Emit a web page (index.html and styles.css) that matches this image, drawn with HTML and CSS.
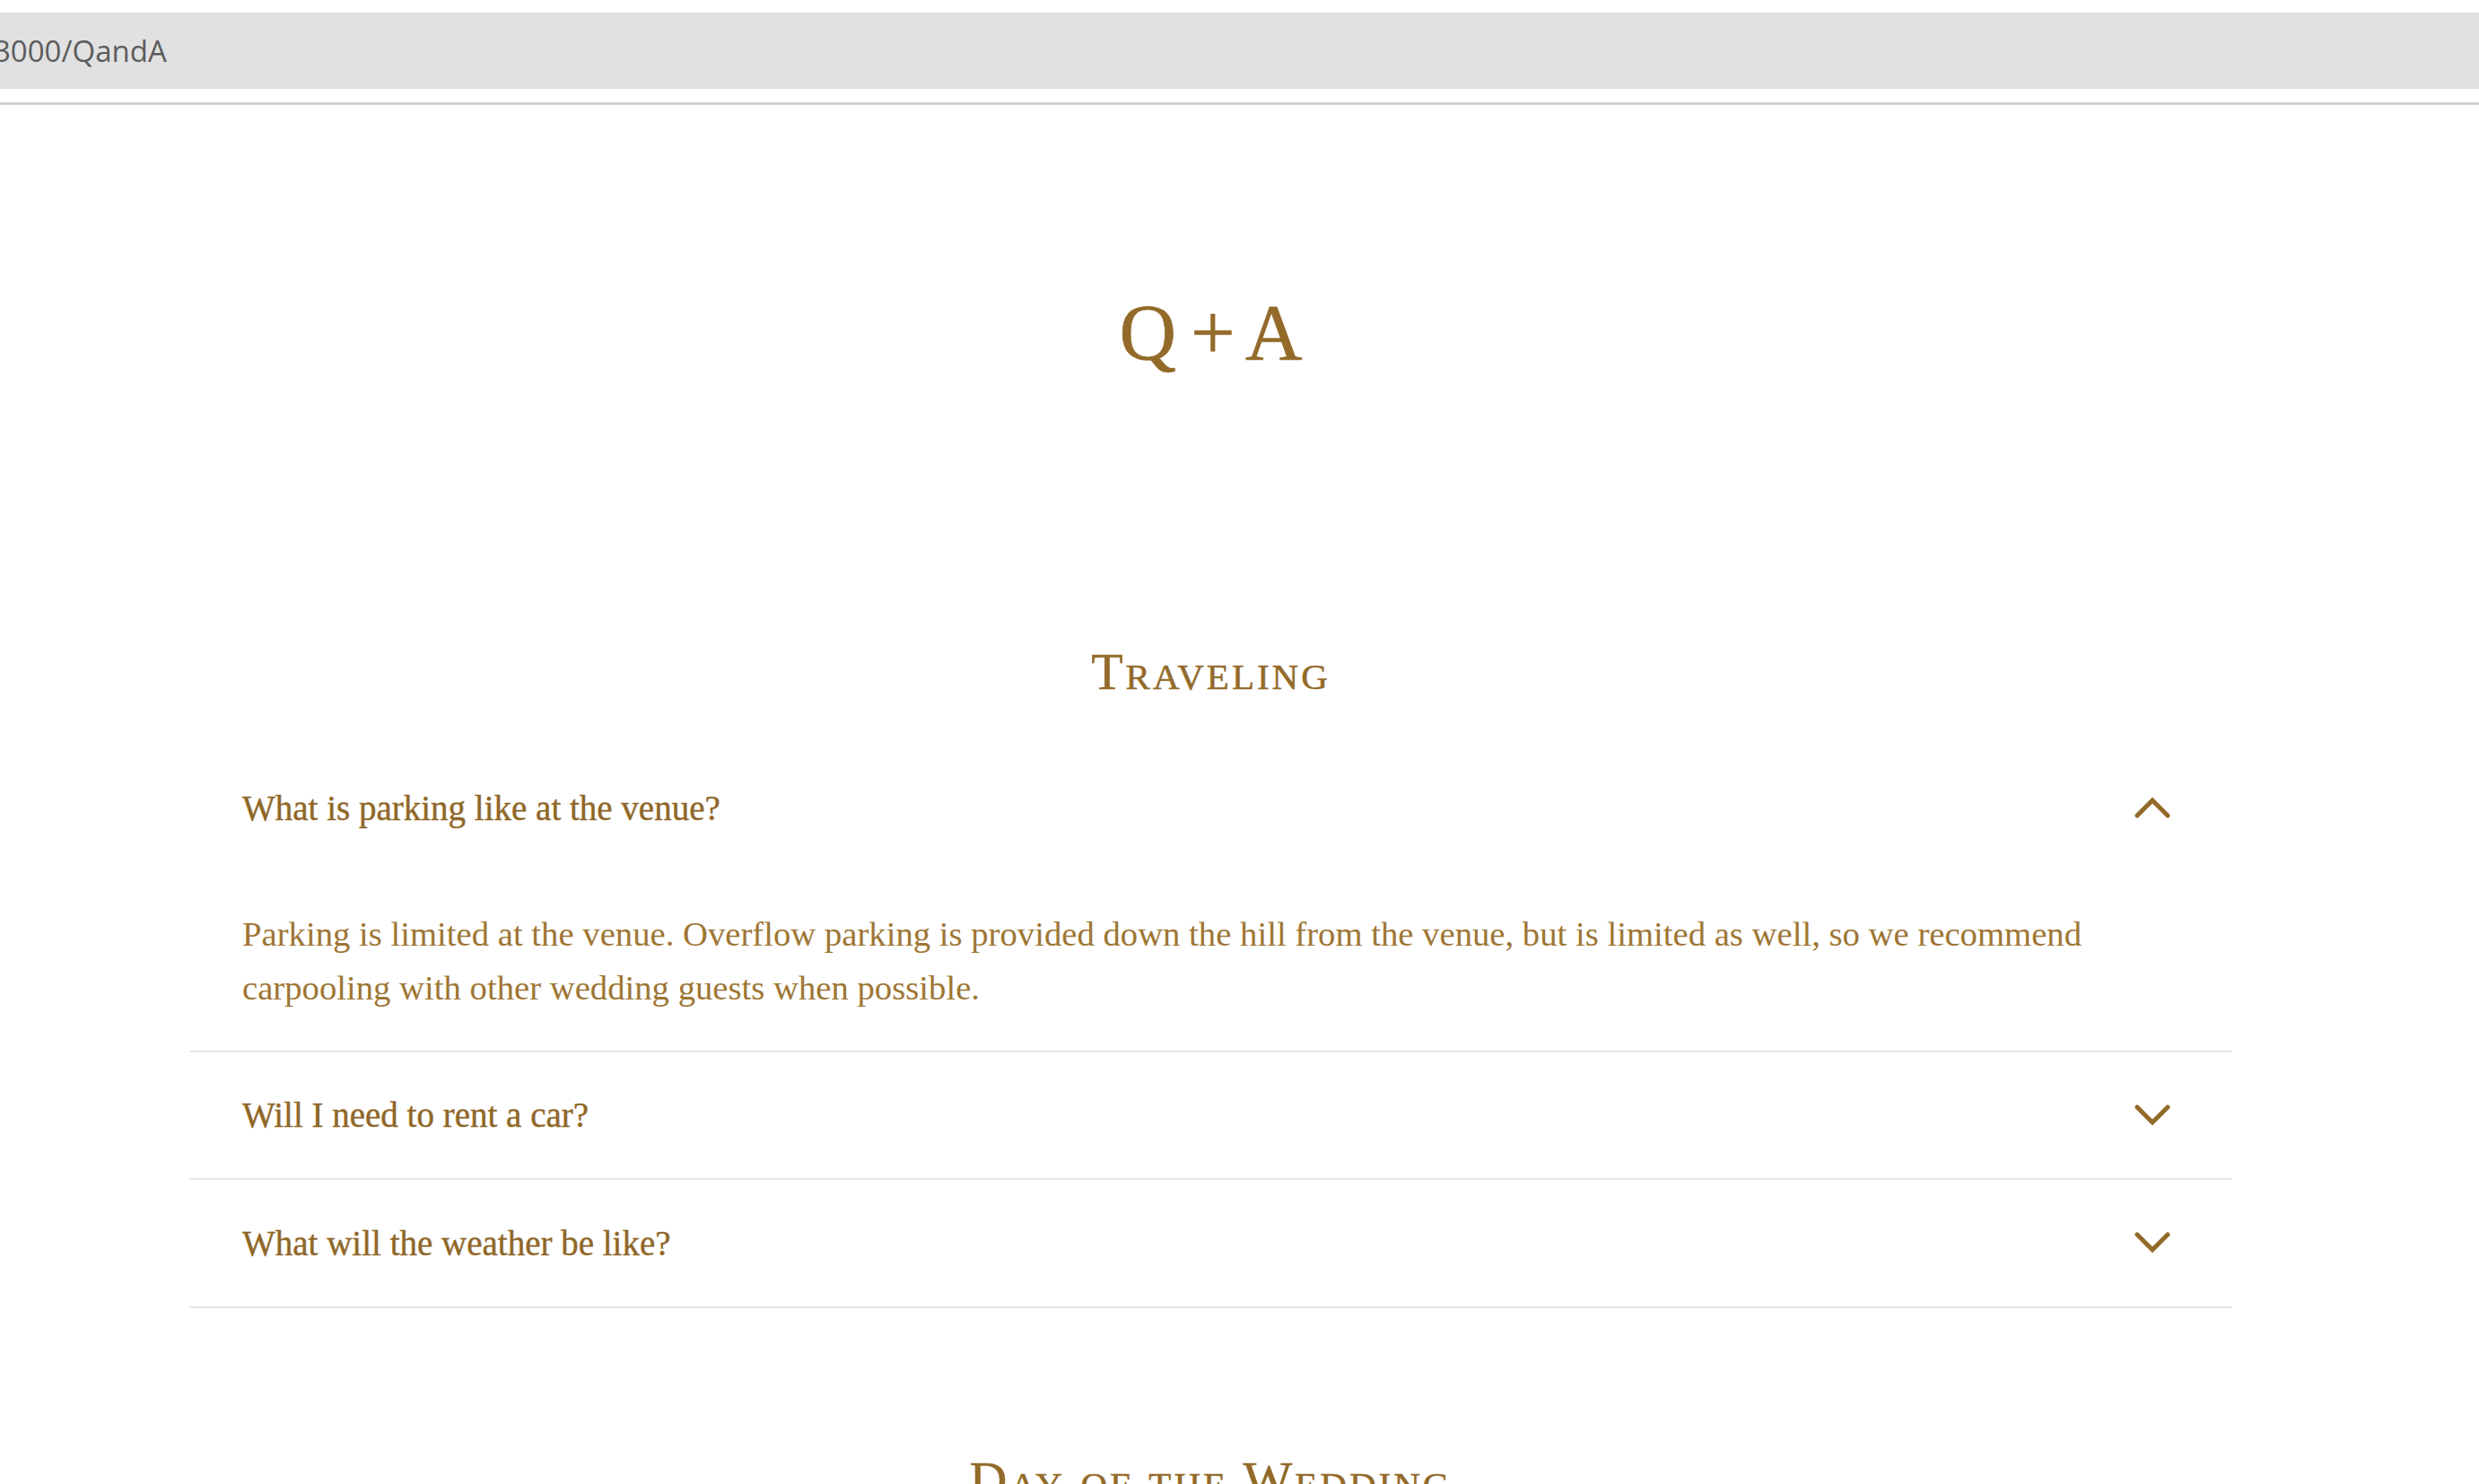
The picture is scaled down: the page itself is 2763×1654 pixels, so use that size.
FILE: index.html
```html
<!DOCTYPE html>
<html lang="en">
<head>
<meta charset="utf-8">
<title>Q + A</title>
<link rel="stylesheet" href="styles.css">
</head>
<body>
  <div class="urlbar"><span class="url">3000/QandA</span></div>
  <div class="rule"></div>
  <main class="page">
    <h1 class="title">Q + A</h1>

    <section class="section">
      <h2 class="section-title">Traveling</h2>
      <div class="faq">
        <div class="item open">
          <div class="question">
            <span>What is parking like at the venue?</span>
            <svg class="chev" viewBox="0 0 40 24" width="40" height="24"><path d="M3 21 20 4 37 21"/></svg>
          </div>
          <div class="answer">Parking is limited at the venue. Overflow parking is provided down the hill from the venue, but is limited as well, so we recommend carpooling with other wedding guests when possible.</div>
        </div>
        <div class="item">
          <div class="question">
            <span>Will I need to rent a car?</span>
            <svg class="chev" viewBox="0 0 40 24" width="40" height="24"><path d="M3 3 20 20 37 3"/></svg>
          </div>
        </div>
        <div class="item">
          <div class="question">
            <span>What will the weather be like?</span>
            <svg class="chev" viewBox="0 0 40 24" width="40" height="24"><path d="M3 3 20 20 37 3"/></svg>
          </div>
        </div>
      </div>
    </section>

    <section class="section next">
      <h2 class="section-title">Day of the Wedding</h2>
    </section>
  </main>
</body>
</html>
```

FILE: styles.css
```css
html, body {
  margin: 0;
  padding: 0;
  background: #ffffff;
}

body {
  font-family: "Liberation Serif", "Times New Roman", serif;
  color: #93692a;
  overflow: hidden;
}

.urlbar {
  margin-top: 14px;
  height: 85px;
  background: #e1e1e1;
  display: flex;
  align-items: center;
  overflow: hidden;
}

.url {
  font-family: "Open Sans", "Noto Sans", sans-serif;
  font-size: 33px;
  color: #5c5c5c;
  margin-left: -7px;
}

.rule {
  margin-top: 15px;
  height: 3px;
  background: #d2d2d2;
}

.page {
  width: 2277px;
  margin-left: 211px;
  padding-top: 210px;
}

.title {
  margin: 0;
  text-align: center;
  font-weight: normal;
  font-size: 88px;
  line-height: 1;
  word-spacing: -6px;
  color: #936a29;
  -webkit-text-stroke: 0.6px #936a29;
}

.section {
  margin-top: 305px;
}

.section.next {
  margin-top: 163px;
}

.section-title {
  margin: 0;
  text-align: center;
  font-weight: normal;
  font-size: 58px;
  line-height: 1;
  font-variant: small-caps;
  letter-spacing: 3px;
  color: #936a29;
  -webkit-text-stroke: 0.5px #936a29;
}

.faq {
  margin-top: 52px;
}

.item {
  border-bottom: 2px solid #e5e5ea;
}

.question {
  height: 140.5px;
  box-sizing: border-box;
  padding: 0 69px 0 59px;
  display: flex;
  align-items: center;
  justify-content: space-between;
  font-size: 39px;
  color: #8f6728;
  -webkit-text-stroke: 0.4px #8f6728;
}

.chev {
  display: block;
  fill: none;
  stroke: #936a29;
  stroke-width: 5;
  stroke-linecap: round;
  stroke-linejoin: miter;
}

.answer {
  padding: 40px 100px 40px 59px;
  font-size: 38.7px;
  line-height: 60px;
  color: #9e7634;
}
```
